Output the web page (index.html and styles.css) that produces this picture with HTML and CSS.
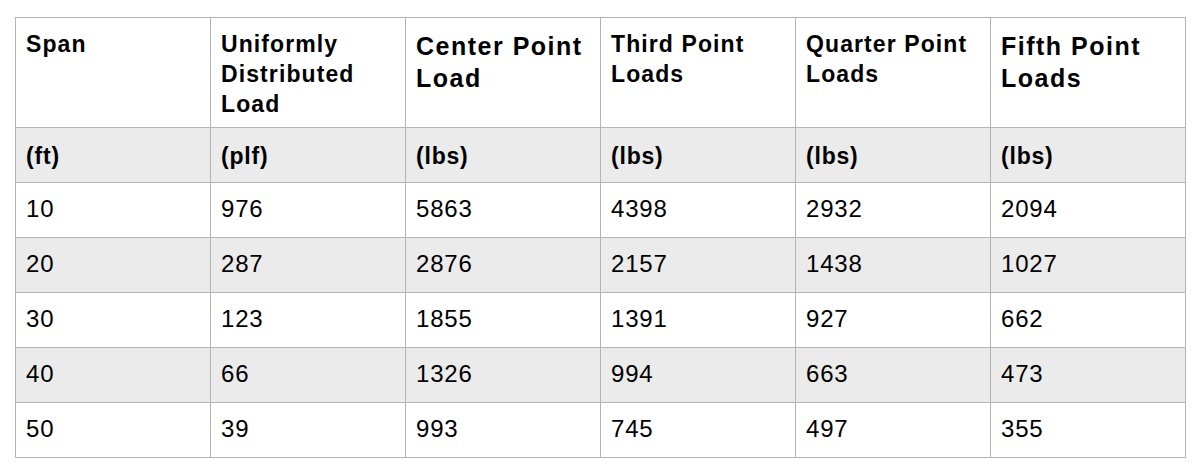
FILE: index.html
```html
<!DOCTYPE html>
<html lang="en">
<head>
<meta charset="utf-8">
<title>Span Loads</title>
<link rel="stylesheet" href="styles.css">
</head>
<body>
<div class="page">
<table class="loads">
  <colgroup>
    <col class="c"><col class="c"><col class="c"><col class="c"><col class="c"><col class="c">
  </colgroup>
  <thead>
    <tr class="head">
      <th>Span</th>
      <th>Uniformly Distributed Load</th>
      <th class="big">Center Point Load</th>
      <th>Third Point Loads</th>
      <th>Quarter Point Loads</th>
      <th class="big">Fifth Point Loads</th>
    </tr>
    <tr class="units">
      <th>(ft)</th>
      <th>(plf)</th>
      <th>(lbs)</th>
      <th>(lbs)</th>
      <th>(lbs)</th>
      <th>(lbs)</th>
    </tr>
  </thead>
  <tbody>
    <tr><td>10</td><td>976</td><td>5863</td><td>4398</td><td>2932</td><td>2094</td></tr>
    <tr class="alt"><td>20</td><td>287</td><td>2876</td><td>2157</td><td>1438</td><td>1027</td></tr>
    <tr><td>30</td><td>123</td><td>1855</td><td>1391</td><td>927</td><td>662</td></tr>
    <tr class="alt"><td>40</td><td>66</td><td>1326</td><td>994</td><td>663</td><td>473</td></tr>
    <tr><td>50</td><td>39</td><td>993</td><td>745</td><td>497</td><td>355</td></tr>
  </tbody>
</table>
</div>
</body>
</html>
```
FILE: styles.css
```css
html, body {
  margin: 0;
  padding: 0;
  background: #ffffff;
}

.page {
  padding: 17px 0 0 15px;
}

.loads {
  border-collapse: collapse;
  table-layout: fixed;
  width: 1171px;
  font-family: "Liberation Sans", Arial, Helvetica, sans-serif;
  color: #000;
}

.loads .c {
  width: 195px;
}

.loads th,
.loads td {
  border: 1px solid #b4b4b4;
  text-align: left;
  padding: 0 8px 0 10px;
}

.head th {
  height: 98px;
  vertical-align: top;
  padding-top: 11px;
  font-size: 23px;
  line-height: 30px;
  letter-spacing: 1.1px;
  font-weight: bold;
}

.head th.big {
  font-size: 25px;
  line-height: 32px;
  letter-spacing: 1.5px;
  padding-top: 12px;
  height: 97px;
}

.units th {
  height: 51px;
  padding-top: 3px;
  background: #ebebeb;
  font-size: 23px;
  letter-spacing: 0.8px;
  font-weight: bold;
  vertical-align: middle;
}

.loads td {
  height: 51px;
  padding-bottom: 3px;
  font-size: 24px;
  letter-spacing: 0.8px;
  vertical-align: middle;
}

.loads tr.alt td {
  background: #ebebeb;
}
```
